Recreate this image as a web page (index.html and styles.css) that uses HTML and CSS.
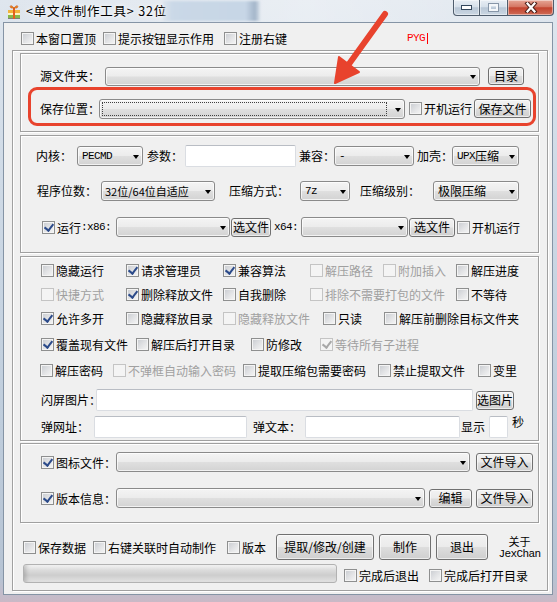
FILE: index.html
```html
<!DOCTYPE html>
<html lang="zh-CN">
<head>
<meta charset="utf-8">
<title>单文件制作工具</title>
<link rel="stylesheet" href="styles.css">
</head>
<body>
<div class="window">
  <div class="titlebar">
    <svg class="appicon" width="16" height="16" viewBox="0 0 16 16">
      <rect x="2" y="7" width="12" height="3" fill="#f2b33a"/>
      <rect x="2" y="10" width="12" height="2" fill="#fff3c2"/>
      <rect x="2" y="12" width="12" height="3" fill="#86b84a"/>
      <rect x="2" y="15" width="12" height="1" fill="#7d7d7d"/>
      <rect x="7" y="5" width="2" height="11" fill="#e2601e"/>
      <path d="M8 5 C5 1 3 3 5 5 Z M8 5 C11 1 13 3 11 5 Z" fill="#f08a24" stroke="#c4581a" stroke-width="0.6"/>
    </svg>
    <span class="title">&lt;单文件制作工具&gt; 32位</span>
    <div class="blurpatch"></div>
    <div class="caption">
      <div class="cbtn cmin"><svg width="11" height="5" viewBox="0 0 11 5"><rect x="0.5" y="0.5" width="10" height="4" fill="#fff" stroke="#34475c"/></svg></div>
      <div class="cbtn cmax"><svg width="11" height="9" viewBox="0 0 11 9"><rect x="0.5" y="0.5" width="10" height="8" fill="none" stroke="#8796a8"/><rect x="2" y="2" width="7" height="5" fill="none" stroke="#f4f7fa" stroke-width="2"/></svg></div>
      <div class="cbtn cclose"><svg width="14" height="11" viewBox="0 0 14 11"><path d="M3.5 1.5 L10.5 9.5 M10.5 1.5 L3.5 9.5" stroke="#4a201a" stroke-width="4.2" stroke-linecap="square"/><path d="M3.5 1.5 L10.5 9.5 M10.5 1.5 L3.5 9.5" stroke="#fff" stroke-width="2.2" stroke-linecap="square"/></svg></div>
    </div>
  </div>

  <div class="client">
    <div class="row toprow h13">
      <label class="chk ml17 w82"><span class="box"></span>本窗口置顶</label>
      <label class="chk w121"><span class="box"></span>提示按钮显示作用</label>
      <label class="chk w183"><span class="box"></span>注册右键</label>
      <span class="pyg mono">PYG<span class="caret"></span></span>
    </div>

    <div class="outer">
      <div class="grp ga">
        <div class="row h20 mt12">
          <span class="lbl ml19 w65">源文件夹：</span>
          <div class="combo w375 h19"></div>
          <div class="btn ml8 w36 h18">目录</div>
        </div>
        <div class="row h21 mt12">
          <span class="lbl ml19 w59">保存位置：</span>
          <div class="combo focus w306 h20"></div>
          <label class="chk ml4"><span class="box"></span>开机运行</label>
          <div class="btn ml2 w57 h19">保存文件</div>
        </div>
      </div>

      <div class="grp gb">
        <div class="row h22 mt9">
          <span class="lbl ml15 w41">内核：</span>
          <div class="combo w66 h20"><span class="mono">PECMD</span></div>
          <span class="lbl ml4 w38">参数：</span>
          <div class="inp w111 h22"></div>
          <span class="lbl ml3 w35">兼容：</span>
          <div class="combo w80 h20"><span class="mono">-</span></div>
          <span class="lbl ml3 w35">加壳：</span>
          <div class="combo w67 h20"><span class="mono">UPX</span>压缩</div>
        </div>
        <div class="row h20 mt14">
          <span class="lbl ml16 w64">程序位数：</span>
          <div class="combo small w114 h20">32位/64位自适应</div>
          <span class="lbl ml14 w71">压缩方式：</span>
          <div class="combo w50 h20"><span class="mono">7z</span></div>
          <span class="lbl ml10 w73">压缩级别：</span>
          <div class="combo w86 h20">极限压缩</div>
        </div>
        <div class="row h20 mt16">
          <label class="chk on ml21 w39"><span class="box"></span>运行</label>
          <span class="mono w30">:x86:</span>
          <div class="combo ml5 w114 h20"></div>
          <div class="btn ml1 w40 h19">选文件</div>
          <span class="mono ml3 w24">x64:</span>
          <div class="combo ml3 w107 h20"></div>
          <div class="btn ml1 w46 h19">选文件</div>
          <label class="chk ml2"><span class="box"></span>开机运行</label>
        </div>
      </div>

      <div class="grp gc">
        <div class="row h13 mt7">
          <label class="chk ml20 w85"><span class="box"></span>隐藏运行</label>
          <label class="chk on w97"><span class="box"></span>请求管理员</label>
          <label class="chk on w87"><span class="box"></span>兼容算法</label>
          <label class="chk dis w73"><span class="box"></span>解压路径</label>
          <label class="chk dis w73"><span class="box"></span>附加插入</label>
          <label class="chk"><span class="box"></span>解压进度</label>
        </div>
        <div class="row h13 mt11">
          <label class="chk dis ml20 w85"><span class="box"></span>快捷方式</label>
          <label class="chk on w97"><span class="box"></span>删除释放文件</label>
          <label class="chk w87"><span class="box"></span>自我删除</label>
          <label class="chk dis w146"><span class="box"></span>排除不需要打包的文件</label>
          <label class="chk"><span class="box"></span>不等待</label>
        </div>
        <div class="row h13 mt11">
          <label class="chk on ml20 w85"><span class="box"></span>允许多开</label>
          <label class="chk w97"><span class="box"></span>隐藏释放目录</label>
          <label class="chk dis w100"><span class="box"></span>隐藏释放文件</label>
          <label class="chk w61"><span class="box"></span>只读</label>
          <label class="chk"><span class="box"></span>解压前删除目标文件夹</label>
        </div>
        <div class="row h13 mt13">
          <label class="chk on ml20 w95"><span class="box"></span>覆盖现有文件</label>
          <label class="chk w115"><span class="box"></span>解压后打开目录</label>
          <label class="chk w69"><span class="box"></span>防修改</label>
          <label class="chk dis on"><span class="box"></span>等待所有子进程</label>
        </div>
        <div class="row h13 mt13">
          <label class="chk ml19 w73"><span class="box"></span>解压密码</label>
          <label class="chk dis w130"><span class="box"></span>不弹框自动输入密码</label>
          <label class="chk w135"><span class="box"></span>提取压缩包需要密码</label>
          <label class="chk w100"><span class="box"></span>禁止提取文件</label>
          <label class="chk"><span class="box"></span>变里</label>
        </div>
        <div class="row h22 mt12">
          <span class="lbl ml20 w55">闪屏图片：</span>
          <div class="inp w377 h22"></div>
          <div class="btn ml3 w38 h19">选图片</div>
        </div>
        <div class="row h22 mt5">
          <span class="lbl ml20 w53">弹网址：</span>
          <div class="inp w153 h22"></div>
          <span class="lbl ml6 w52">弹文本：</span>
          <div class="inp w155 h22"></div>
          <span class="lbl ml1 w28">显示</span>
          <div class="inp w19 h22"></div>
          <span class="lbl ml4 sec">秒</span>
        </div>
      </div>

      <div class="grp gd">
        <div class="row h20 mt8">
          <label class="chk on ml20 w75"><span class="box"></span>图标文件：</label>
          <div class="combo w354 h20"></div>
          <div class="btn ml6 w57 h19">文件导入</div>
        </div>
        <div class="row h20 mt16">
          <label class="chk on ml20 w75"><span class="box"></span>版本信息：</label>
          <div class="combo w309 h20"></div>
          <div class="btn ml4 w43 h19">编辑</div>
          <div class="btn ml4 w57 h19">文件导入</div>
        </div>
      </div>

      <div class="row h26 mt11">
        <label class="chk ml10 w70"><span class="box"></span>保存数据</label>
        <label class="chk w134"><span class="box"></span>右键关联时自动制作</label>
        <label class="chk w49"><span class="box"></span>版本</label>
        <div class="btn w98 h26">提取/修改/创建</div>
        <div class="btn ml5 w52 h26">制作</div>
        <div class="btn ml5 w52 h26">退出</div>
        <div class="about ml10 w43"><span class="about-t">关于</span><span class="about-m mono">JexChan</span></div>
      </div>
      <div class="row h19 mt4">
        <div class="progress ml10 w314 h19"></div>
        <label class="chk ml7 w85 lowered"><span class="box"></span>完成后退出</label>
        <label class="chk lowered"><span class="box"></span>完成后打开目录</label>
      </div>
    </div>
  </div>

  <div class="annot-rect"></div>
  <svg class="annot-arrow" width="557" height="602" viewBox="0 0 557 602">
    <line x1="385" y1="14" x2="349" y2="64" stroke="#e8432d" stroke-width="6" stroke-linecap="round"/>
    <polygon points="335,83 339,57 359,72" fill="#e8432d" stroke="#e8432d" stroke-width="2" stroke-linejoin="round"/>
  </svg>
</div>
</body>
</html>
```

FILE: styles.css
```css
* { box-sizing: border-box; }
html, body { margin: 0; padding: 0; }
body {
  width: 557px; height: 602px; overflow: hidden;
  font-family: "Noto Sans CJK SC", "Noto Sans", sans-serif;
  font-size: 12px; color: #000;
  background: #b9c8d8;
}

.window {
  position: relative;
  width: 557px; height: 602px;
  background: linear-gradient(180deg, #dfe6ee 0, #cfdae6 30%, #bfcddc 70%, #b6c3d3 96%, #c9b9c6 100%);
}

/* title bar */
.titlebar {
  height: 22px;
  display: flex; align-items: center;
  background: linear-gradient(90deg, rgba(255,255,255,0) 0, rgba(255,255,255,.35) 55%, rgba(255,255,255,.2) 80%, rgba(255,255,255,0) 100%);
}
.appicon { margin-left: 6px; flex: none; }
.title {
  margin-left: 4px; width: 134px; flex: none;
  font-size: 12.5px; letter-spacing: 0.8px; line-height: 22px; white-space: nowrap;
  text-shadow: 0 0 6px #fff, 0 0 3px #fff;
}
.blurpatch {
  margin-left: 3px; width: 97px; height: 20px; flex: none;
  background: linear-gradient(90deg, rgba(200,214,230,.3), #cad8e7 10%, #c7d6e6 85%, #a3b5c9 95%, rgba(190,205,220,.3));
  filter: blur(1px);
}
.caption { margin-left: auto; margin-right: 3px; align-self: flex-start; display: flex; height: 16px; }
.cbtn {
  height: 16px; display: flex; align-items: center; justify-content: center;
  border: 1px solid #4f5d6d; border-top: none;
  box-shadow: inset 0 0 0 1px rgba(255,255,255,.45);
}
.cmin {
  width: 27px; border-radius: 0 0 0 4px;
  background: linear-gradient(180deg, #e8eef4 0, #d6e0ea 45%, #b9c7d6 52%, #cbd7e3 100%);
}
.cmax {
  width: 28px; border-left: none;
  background: linear-gradient(180deg, #e8eef4 0, #d6e0ea 45%, #b9c7d6 52%, #cbd7e3 100%);
}
.cclose {
  width: 46px; border-left: none; border-radius: 0 0 4px 0;
  background: linear-gradient(180deg, #e6a696 0, #d57663 45%, #c2432e 52%, #cf6b56 100%);
}

/* client */
.client {
  margin-left: 3px; width: 550px; height: 573px;
  background: #f0f0f0;
  border: 1px solid #8594a5;
}
.row { display: flex; align-items: center; }
.toprow { margin-top: 9px; }
.pyg { color: #ff0000; display: flex; align-items: center; line-height: 13px; }
.caret { display: inline-block; width: 1px; height: 11px; background: #ff0000; margin-left: 2px; }

.outer {
  margin-left: 8px; margin-top: 5px;
  width: 536px; height: 541px;
  border: 1px solid #a0a0a0;
  box-shadow: inset 1px 1px 0 #fff, 1px 1px 0 #fff;
}
.grp {
  margin-left: 7px; width: 519px;
  border: 1px solid #a0a0a0;
  box-shadow: inset 1px 1px 0 #fff, 1px 1px 0 #fff;
}
.ga { margin-top: 2px; height: 79px; }
.gb { margin-top: 3px; height: 118px; }
.gc { margin-top: 3px; height: 185px; }
.gd { margin-top: 2px; height: 80px; }

.lbl { flex: none; white-space: nowrap; line-height: 16px; }
.sec { align-self: flex-start; margin-top: -2px; }
.mono {
  font-family: "Liberation Mono", "DejaVu Sans Mono", monospace;
  font-size: 11px; letter-spacing: -0.6px;
  flex: none; white-space: pre;
}

/* checkbox */
.chk {
  display: flex; align-items: center; flex: none;
  height: 13px; line-height: 13px; white-space: nowrap;
}
.box {
  position: relative; flex: none;
  width: 13px; height: 13px; margin-right: 2px;
  border: 1px solid #8e8f8f;
  background: linear-gradient(135deg, #c8cbd0 0, #e3e4e6 55%, #f6f6f6 100%);
  box-shadow: inset 0 0 0 1px #f4f4f4;
}
.chk.on .box::after {
  content: ""; position: absolute;
  left: 3px; top: 0px; width: 4px; height: 7px;
  border: solid #2b4a8a; border-width: 0 2px 2px 0;
  transform: rotate(38deg);
}
.chk.dis { color: #a0a0a0; }
.chk.dis .box { border-color: #c4c4c4; background: #f4f4f4; box-shadow: none; }
.chk.dis.on .box::after { border-color: #a8a8a8; }
.lowered { margin-top: 4px; }

/* combo */
.combo {
  position: relative; flex: none;
  display: flex; align-items: center; padding-left: 4px;
  border: 1px solid #8a8a8a; border-radius: 3px;
  background: linear-gradient(180deg, #f4f4f4 0, #ececec 48%, #dfdfdf 52%, #d3d3d3 100%);
  box-shadow: inset 0 0 0 1px rgba(255,255,255,.7);
  white-space: nowrap; line-height: 16px;
}
.combo.small { font-size: 11px; padding-left: 3px; }
.combo::after {
  content: ""; position: absolute;
  right: 3px; top: 50%; margin-top: -1px;
  border-style: solid; border-width: 4px 3.5px 0 3.5px;
  border-color: #000 transparent transparent transparent;
}
.combo.focus::before {
  content: ""; position: absolute;
  left: 2px; top: 2px; bottom: 2px; right: 17px;
  border: 1px dotted #404040;
}

/* button */
.btn {
  flex: none; display: flex; align-items: center; justify-content: center;
  border: 1px solid #707070; border-radius: 3px;
  background: linear-gradient(180deg, #f2f2f2 0, #ebebeb 48%, #dddddd 52%, #cfcfcf 100%);
  box-shadow: inset 0 0 0 1px rgba(255,255,255,.6);
  white-space: nowrap; line-height: 14px;
}

/* text input */
.inp {
  flex: none; background: #fff;
  border: 1px solid #dadde2; border-top-color: #b9bdc4;
  border-radius: 2px;
}

.progress {
  flex: none;
  border: 1px solid #b2b2b2; border-radius: 3px;
  background: linear-gradient(180deg, #f3f3f3 0, #dcdcdc 30%, #cdcdcd 60%, #e2e2e2 100%);
  box-shadow: inset 5px 0 4px -3px rgba(0,0,0,.18);
}

.about {
  flex: none; display: flex; flex-direction: column; align-items: center;
}
.about-t { display: block; font-size: 11px; line-height: 12px; height: 12px; }
.about-m { display: block; line-height: 12px; height: 12px; margin-top: 1px; }

/* annotations */
.annot-rect {
  position: absolute; left: 28px; top: 87px;
  width: 508px; height: 39px;
  border: 3px solid #e8432d; border-radius: 9px;
}
.annot-arrow { position: absolute; left: 0; top: 0; pointer-events: none; }

/* spacing utilities */
.ml1 { margin-left: 1px; } .ml2 { margin-left: 2px; } .ml3 { margin-left: 3px; }
.ml4 { margin-left: 4px; } .ml5 { margin-left: 5px; } .ml6 { margin-left: 6px; }
.ml7 { margin-left: 7px; } .ml8 { margin-left: 8px; } .ml10 { margin-left: 10px; }
.ml14 { margin-left: 14px; } .ml15 { margin-left: 15px; } .ml16 { margin-left: 16px; }
.ml17 { margin-left: 17px; } .ml19 { margin-left: 19px; } .ml20 { margin-left: 20px; }
.ml21 { margin-left: 21px; }
.mt4 { margin-top: 4px; } .mt5 { margin-top: 5px; } .mt7 { margin-top: 7px; }
.mt8 { margin-top: 8px; } .mt9 { margin-top: 9px; } .mt11 { margin-top: 11px; }
.mt12 { margin-top: 12px; } .mt13 { margin-top: 13px; } .mt14 { margin-top: 14px; }
.mt16 { margin-top: 16px; }
.h13 { height: 13px; } .h18 { height: 18px; } .h19 { height: 19px; } .h20 { height: 20px; }
.h21 { height: 21px; } .h22 { height: 22px; } .h26 { height: 26px; }
.w19 { width: 19px; } .w24 { width: 24px; } .w28 { width: 28px; } .w30 { width: 30px; }
.w35 { width: 35px; } .w36 { width: 36px; } .w38 { width: 38px; } .w39 { width: 39px; }
.w40 { width: 40px; } .w41 { width: 41px; } .w43 { width: 43px; } .w46 { width: 46px; }
.w49 { width: 49px; } .w50 { width: 50px; } .w52 { width: 52px; } .w53 { width: 53px; }
.w55 { width: 55px; } .w57 { width: 57px; } .w59 { width: 59px; } .w61 { width: 61px; }
.w64 { width: 64px; } .w65 { width: 65px; } .w66 { width: 66px; } .w67 { width: 67px; }
.w69 { width: 69px; } .w70 { width: 70px; } .w71 { width: 71px; } .w73 { width: 73px; }
.w75 { width: 75px; } .w80 { width: 80px; } .w82 { width: 82px; } .w85 { width: 85px; }
.w86 { width: 86px; } .w87 { width: 87px; } .w95 { width: 95px; } .w97 { width: 97px; }
.w98 { width: 98px; } .w100 { width: 100px; } .w107 { width: 107px; } .w111 { width: 111px; }
.w114 { width: 114px; } .w115 { width: 115px; } .w121 { width: 121px; } .w130 { width: 130px; }
.w134 { width: 134px; } .w135 { width: 135px; } .w146 { width: 146px; } .w153 { width: 153px; }
.w155 { width: 155px; } .w183 { width: 183px; } .w306 { width: 306px; } .w309 { width: 309px; }
.w314 { width: 314px; } .w354 { width: 354px; } .w375 { width: 375px; } .w377 { width: 377px; }
```
